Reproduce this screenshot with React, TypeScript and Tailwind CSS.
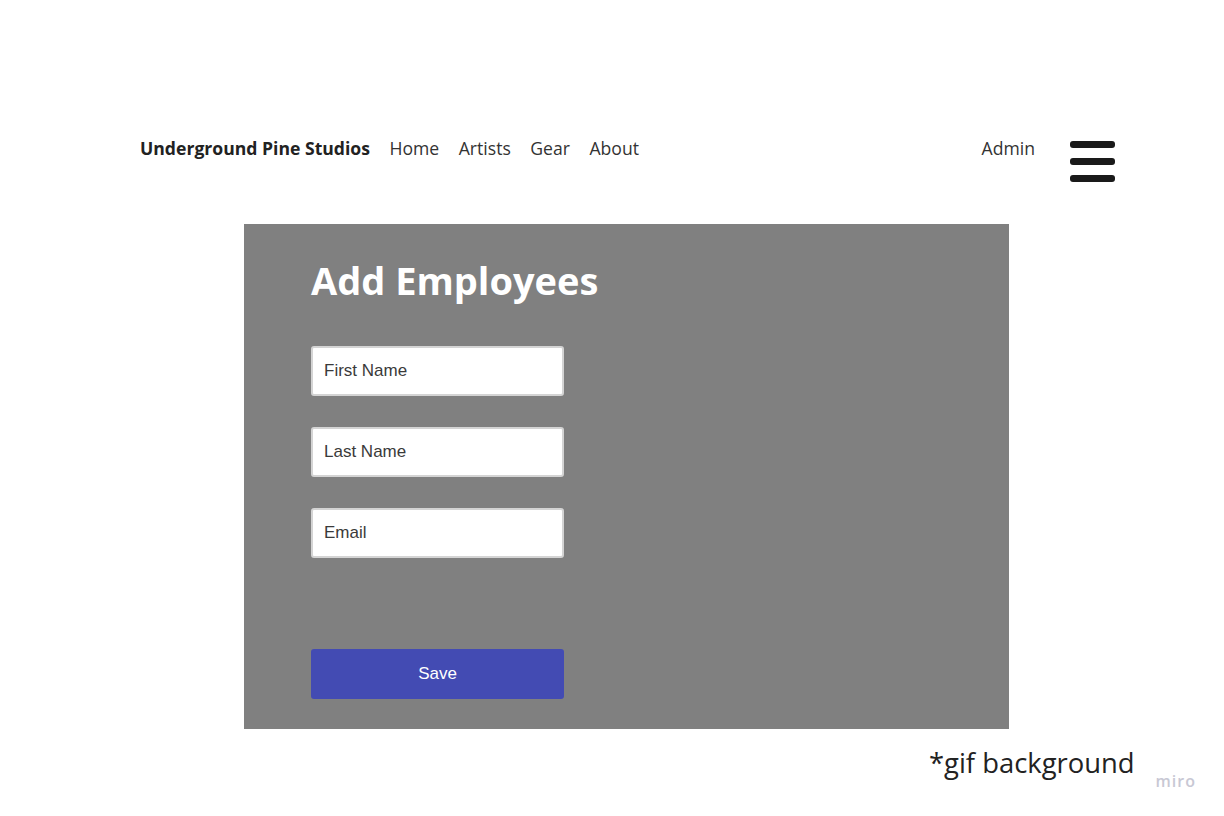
import React from "react";

export default function App() {
  const fields = ["First Name", "Last Name", "Email"];
  return (
    <div className="relative w-[1224px] h-[816px] bg-white overflow-hidden font-['Open_Sans',sans-serif]">
      <header className="flex items-start pl-[140px] pr-[109px] pt-[136px] h-[186px]">
        <div className="flex items-center gap-[19.5px] text-[17.6px] leading-[24px] text-[#333]">
          <span className="font-bold text-[#222]">Underground Pine Studios</span>
          <span>Home</span>
          <span>Artists</span>
          <span>Gear</span>
          <span>About</span>
        </div>
        <div className="ml-auto flex items-start gap-[35px]">
          <span className="text-[17.6px] leading-[24px] text-[#333]">Admin</span>
          <div className="flex flex-col gap-[10px] pt-[5px]">
            <div className="w-[45px] h-[7px] rounded-[3px] bg-[#1a1a1a]" />
            <div className="w-[45px] h-[7px] rounded-[3px] bg-[#1a1a1a]" />
            <div className="w-[45px] h-[7px] rounded-[3px] bg-[#1a1a1a]" />
          </div>
        </div>
      </header>
      <main className="ml-[244px] mt-[38px] w-[765px] h-[505px] bg-[#808080] pl-[67px] pt-[31px]">
        <h1 className="text-[38px] leading-[50px] font-bold text-white">Add Employees</h1>
        <div className="mt-[41px] flex flex-col gap-[31px]">
          {fields.map((f) => (
            <div
              key={f}
              className="w-[253px] h-[50px] bg-white border-2 border-[#d4d4d4] rounded-[3px] flex items-center pl-[11px] font-['Liberation_Sans',Arial,sans-serif] text-[17px] text-[#3a3a3a]"
            >
              {f}
            </div>
          ))}
        </div>
        <button className="mt-[91px] w-[253px] h-[50px] bg-[#434bb3] rounded-[3px] text-white font-['Liberation_Sans',Arial,sans-serif] text-[17px]">
          Save
        </button>
      </main>
      <div className="flex justify-end pr-[28px] mt-[16px] items-start">
        <span className="text-[27.4px] leading-[36px] text-[#222] mr-[21px]">*gif background</span>
        <span className="mt-[26px] text-[16px] leading-[20px] font-semibold text-[#c8c8d4] tracking-[1px]">miro</span>
      </div>
    </div>
  );
}
